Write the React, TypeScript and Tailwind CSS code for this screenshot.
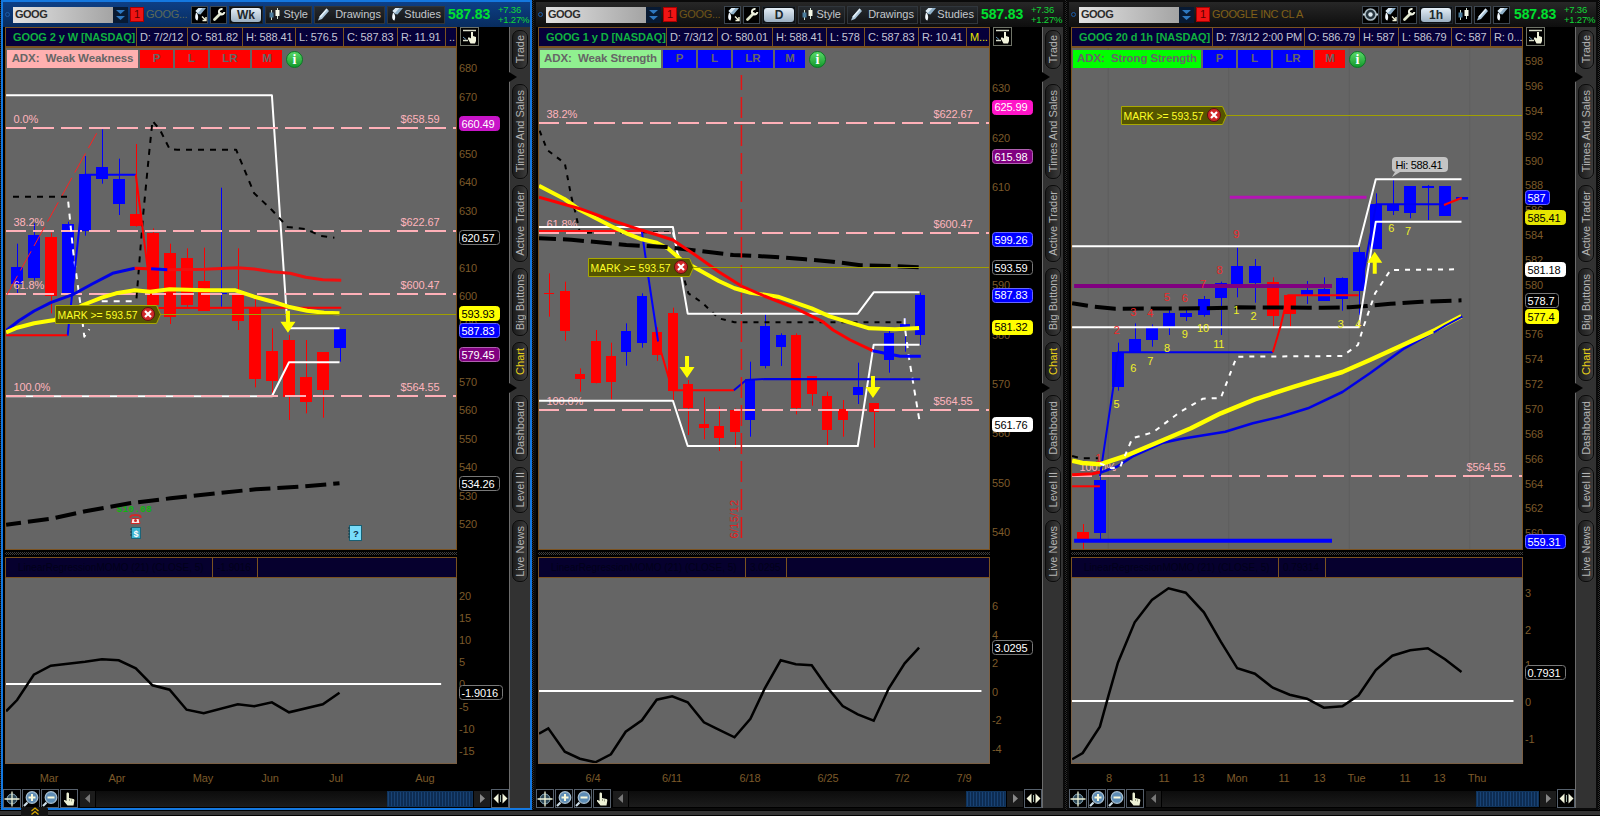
import React from 'react';

type Pt = [number, number];
type Candle = [number, number, number, number, number, 'r' | 'b']; // x, top, bottom, high, low
type Line = { c: string; w: number; p: Pt[]; dash?: string; off?: number };
type Bubble = { v: string; y: number; bg: string; fg?: string; w?: number };
type Tick = [string, number];

interface Panel {
    active?: boolean;
    wide?: boolean;
    name: string;
    period: string;
    title: string;
    cells: { t: string; w: number; c?: string }[];
    adx: { t: string; w: string; bg: string };
    mBg: string;
    flagBg: string;
    k: number;
    dx: number;
    bodyW: number;
    candles: Candle[];
    under: Line[];
    lines: Line[];
    fibs: { pct: string; price: string; y: number }[];
    mark: Pt;
    arrows: { x: number; y: number; up?: boolean }[];
    ticks: Tick[];
    bubbles: Bubble[];
    sub: { p: Pt[]; zero: number; zeroEnd: number; ticks: Tick[]; bubble: Bubble; seps: string[]; label: string; value: string };
    dates: [string, number][];
    thumb: string;
}

const RED = '#ff0000';
const BLUE = '#0000ff';
const YEL = '#ffff00';
const LONG = '21 7';
const SHORT = '6 6';

const panels: Panel[] = [
    {
        active: true,
        name: 'GOOG...',
        period: 'Wk',
        title: 'GOOG 2 y W [NASDAQ]',
        cells: [
            { t: 'D: 7/2/12', w: 51 },
            { t: 'O: 581.82', w: 55 },
            { t: 'H: 588.41', w: 53 },
            { t: 'L: 576.5', w: 48 },
            { t: 'C: 587.83', w: 54 },
            { t: 'R: 11.91', w: 48 },
            { t: '..', w: 10 },
        ],
        adx: { t: 'ADX:  Weak Weakness', w: 'w-[131px]', bg: 'bg-[#ffb0b0]' },
        mBg: 'bg-[#ff0000]',
        flagBg: 'bg-[#ff0000]',
        k: 2.931,
        dx: 0,
        bodyW: 12,
        candles: [
            [49, 561, 612, 491, 640, 'b'],
            [99, 465, 593, 430, 602, 'b'],
            [149, 471, 647, 458, 700, 'r'],
            [200, 432, 642, 425, 645, 'b'],
            [249, 282, 452, 228, 467, 'b'],
            [299, 261, 297, 148, 311, 'b'],
            [348, 297, 372, 236, 405, 'b'],
            [398, 402, 437, 192, 440, 'r'],
            [449, 458, 675, 445, 675, 'r'],
            [498, 519, 712, 491, 732, 'r'],
            [547, 534, 675, 505, 682, 'r'],
            [597, 603, 692, 503, 692, 'r'],
            [647, 640, 643, 323, 680, 'b'],
            [697, 645, 722, 505, 750, 'r'],
            [747, 683, 897, 655, 922, 'r'],
            [797, 813, 903, 745, 945, 'r'],
            [847, 780, 950, 765, 1020, 'r'],
            [896, 891, 967, 780, 1000, 'r'],
            [946, 816, 930, 816, 1013, 'r'],
            [996, 747, 804, 747, 845, 'b'],
        ],
        under: [],
        lines: [
            { c: '#fff', w: 2, p: [[18, 46], [797, 46], [843, 745], [995, 745]] },
            { c: '#fff', w: 2, p: [[18, 949], [797, 949], [847, 847], [995, 847]] },
            { c: '#ff2020', w: 1, p: [[20, 645], [283, 160]], dash: '22 6' },
            { c: '#000', w: 2, p: [[38, 350], [200, 350]], dash: SHORT },
            { c: '#fff', w: 2, p: [[200, 365], [215, 520], [235, 668], [247, 770], [262, 748]], dash: SHORT },
            { c: '#fff', w: 2, p: [[298, 664], [388, 664]], dash: SHORT },
            { c: '#000', w: 2, p: [[400, 655], [412, 500], [420, 400], [437, 220], [447, 122], [470, 152], [497, 207], [520, 209], [692, 209], [745, 340], [797, 390], [843, 441], [896, 447], [940, 468], [980, 473]], dash: SHORT },
            { c: BLUE, w: 2, p: [[198, 767], [218, 580], [249, 284], [398, 284]] },
            { c: RED, w: 2, p: [[398, 284], [442, 640], [447, 675]] },
            { c: RED, w: 2, p: [[465, 684], [1000, 683]] },
            { c: RED, w: 2, p: [[18, 766], [197, 766]] },
            { c: '#0000e6', w: 3, p: [[18, 752], [55, 722], [100, 693], [150, 667], [215, 643], [270, 612], [330, 580], [395, 565]] },
            { c: RED, w: 3, p: [[395, 565], [431, 566]] },
            { c: BLUE, w: 3, p: [[443, 566], [491, 569]] },
            { c: '#f01010', w: 3, p: [[491, 569], [600, 568], [697, 563], [745, 567], [797, 575], [850, 580], [896, 592], [946, 599], [1000, 601]] },
            { c: YEL, w: 4, p: [[18, 757], [50, 743], [100, 730], [160, 720], [243, 675], [300, 652], [340, 640], [395, 631], [440, 635], [497, 628], [600, 631], [690, 631], [745, 650], [800, 665], [845, 680], [900, 692], [950, 698], [995, 700]] },
            { c: '#000', w: 4, p: [[18, 1334], [150, 1316], [250, 1294], [380, 1270], [500, 1255], [640, 1239], [750, 1228], [880, 1220], [995, 1210]], dash: LONG, off: 6 },
        ],
        fibs: [
            { pct: '0.0%', price: '$658.59', y: 146 },
            { pct: '38.2%', price: '$622.67', y: 455 },
            { pct: '61.8%', price: '$600.47', y: 644 },
            { pct: '100.0%', price: '$564.55', y: 950 },
        ],
        mark: [162, 703],
        arrows: [{ x: 844, y: 692 }],
        ticks: [['680', 68], ['670', 97], ['650', 154], ['640', 182], ['630', 211], ['610', 268], ['600', 296], ['590', 324], ['570', 382], ['560', 410], ['550', 439], ['540', 467], ['530', 496], ['520', 524]],
        bubbles: [
            { v: '660.49', y: 123.5, bg: '#c814c8' },
            { v: '620.57', y: 237.5, bg: '#000' },
            { v: '593.93', y: 313.5, bg: YEL, fg: '#000' },
            { v: '587.83', y: 330.5, bg: BLUE },
            { v: '579.45', y: 354.5, bg: '#800080' },
            { v: '534.26', y: 483.5, bg: '#000' },
        ],
        sub: {
            p: [[18, 484], [50, 450], [99, 374], [149, 347], [249, 335], [299, 328], [348, 331], [398, 355], [447, 406], [497, 419], [547, 479], [597, 490], [697, 463], [745, 469], [797, 457], [847, 487], [946, 463], [995, 428]],
            zero: 401,
            zeroEnd: 1293,
            ticks: [['20', 596], ['15', 618], ['10', 640], ['5', 662], ['0', 684], ['-5', 707], ['-10', 729], ['-15', 751]],
            bubble: { v: '-1.9016', y: 692.5, bg: '#000', w: 44 },
            seps: ['w-[207px]', 'w-[45px]'],
            label: 'LinearRegressionMOMO (21) (CLOSE, 5)',
            value: '-1.9016',
        },
        dates: [['Mar', 49], ['Apr', 117], ['May', 203], ['Jun', 270], ['Jul', 336], ['Aug', 425]],
        thumb: 'w-[86px]',
    },
    {
        name: 'GOOG...',
        period: 'D',
        title: 'GOOG 1 y D [NASDAQ]',
        cells: [
            { t: 'D: 7/3/12', w: 51 },
            { t: 'O: 580.01', w: 55 },
            { t: 'H: 588.41', w: 54 },
            { t: 'L: 578', w: 38 },
            { t: 'C: 587.83', w: 54 },
            { t: 'R: 10.41', w: 48 },
            { t: 'M...', w: 22, c: 'text-[#e8e800]' },
        ],
        adx: { t: 'ADX:  Weak Strength', w: 'w-[121px]', bg: 'bg-[#90f090]' },
        mBg: 'bg-[#0000ff]',
        flagBg: 'bg-[#0000ff]',
        k: 2.904,
        dx: -3,
        bodyW: 10,
        candles: [
            [55, 640, 643, 580, 710, 'r'],
            [101, 633, 753, 605, 782, 'r'],
            [145, 882, 896, 865, 935, 'r'],
            [191, 783, 908, 750, 910, 'r'],
            [235, 827, 905, 788, 958, 'r'],
            [278, 753, 816, 730, 857, 'b'],
            [325, 647, 789, 640, 803, 'b'],
            [368, 755, 824, 742, 843, 'r'],
            [415, 698, 932, 683, 960, 'r'],
            [458, 912, 984, 900, 1065, 'r'],
            [505, 1032, 1043, 952, 1078, 'r'],
            [548, 1039, 1073, 980, 1113, 'r'],
            [595, 991, 1055, 985, 1103, 'r'],
            [638, 897, 1019, 845, 1070, 'b'],
            [682, 738, 857, 702, 865, 'b'],
            [728, 765, 800, 760, 858, 'b'],
            [772, 765, 984, 760, 1003, 'r'],
            [818, 888, 941, 888, 977, 'r'],
            [862, 948, 1050, 935, 1100, 'r'],
            [908, 987, 1019, 960, 1070, 'r'],
            [952, 921, 944, 848, 972, 'b'],
            [998, 969, 995, 969, 1103, 'r'],
            [1042, 759, 839, 750, 878, 'b'],
            [1088, 732, 740, 715, 815, 'b'],
            [1132, 645, 765, 638, 795, 'b'],
        ],
        under: [],
        lines: [
            { c: '#000', w: 2, p: [[28, 152], [50, 210], [101, 250], [120, 350], [130, 390], [145, 458], [300, 457], [415, 457]], dash: '5 6' },
            { c: '#fff', w: 2, p: [[415, 457], [435, 545]], dash: '5 6' },
            { c: '#000', w: 2, p: [[440, 570], [460, 640], [500, 668], [548, 715], [594, 727], [1088, 727]], dash: '5 6' },
            { c: '#fff', w: 2, p: [[1088, 715], [1088, 737], [1100, 830], [1131, 1023]], dash: SHORT },
            { c: '#fff', w: 2, p: [[26, 441], [415, 441], [458, 701], [952, 701], [998, 637], [1131, 637]] },
            { c: '#fff', w: 2, p: [[26, 962], [415, 962], [458, 1098], [952, 1098], [998, 794], [1131, 794]] },
            { c: '#ff1010', w: 2, p: [[26, 453], [325, 453]] },
            { c: BLUE, w: 2, p: [[325, 455], [345, 600], [372, 785]] },
            { c: RED, w: 2, p: [[372, 785], [402, 890], [413, 931], [592, 931]] },
            { c: '#0000e6', w: 2, p: [[592, 931], [628, 900], [682, 897], [1133, 898]] },
            { c: YEL, w: 4, p: [[26, 317], [100, 357], [145, 390], [235, 438], [280, 460], [325, 478], [368, 488], [400, 505], [440, 540], [500, 575], [548, 603], [594, 625], [640, 638], [720, 650], [818, 685], [870, 709], [930, 728], [985, 745], [1060, 748], [1130, 744]] },
            { c: '#000', w: 4, p: [[26, 475], [120, 479], [200, 487], [280, 495], [395, 501], [500, 514], [590, 525], [700, 530], [800, 538], [880, 545], [960, 556], [1050, 558], [1130, 562]], dash: LONG, off: 4 },
            { c: RED, w: 3, p: [[26, 352], [145, 386], [235, 420], [325, 451], [368, 464], [415, 480], [480, 525], [548, 575], [614, 618], [680, 648], [772, 685], [850, 725], [880, 750], [930, 780], [995, 812]] },
            { c: BLUE, w: 3, p: [[995, 812], [1042, 822], [1075, 829], [1135, 829]] },
            { c: '#e61414', w: 1.5, p: [[614, -15], [614, 1392]], dash: '21 7', off: 6 },
        ],
        fibs: [
            { pct: '38.2%', price: '$622.67', y: 130 },
            { pct: '61.8%', price: '$600.47', y: 461 },
            { pct: '100.0%', price: '$564.55', y: 991 },
        ],
        mark: [169, 562],
        arrows: [{ x: 456, y: 828 }, { x: 996, y: 888 }],
        ticks: [['630', 88], ['620', 138], ['610', 187], ['590', 285], ['580', 335], ['570', 384], ['560', 433], ['550', 483], ['540', 532]],
        bubbles: [
            { v: '625.99', y: 107, bg: '#ff14c8' },
            { v: '615.98', y: 156.5, bg: '#800080' },
            { v: '599.26', y: 239.5, bg: BLUE },
            { v: '593.59', y: 267.5, bg: '#000' },
            { v: '587.83', y: 295, bg: BLUE },
            { v: '581.32', y: 327, bg: YEL, fg: '#000' },
            { v: '561.76', y: 424.5, bg: '#fff', fg: '#000' },
        ],
        sub: {
            p: [[26, 551], [53, 535], [101, 605], [145, 626], [190, 637], [235, 613], [278, 545], [325, 511], [368, 449], [413, 439], [458, 457], [505, 517], [548, 539], [594, 562], [640, 506], [682, 415], [728, 331], [772, 343], [818, 346], [862, 410], [908, 468], [952, 493], [998, 512], [1042, 415], [1088, 340], [1130, 293]],
            zero: 424,
            zeroEnd: 1311,
            ticks: [['6', 606], ['4', 634.5], ['2', 663], ['0', 692], ['-2', 720], ['-4', 749]],
            bubble: { v: '3.0295', y: 647.5, bg: '#000' },
            seps: ['w-[207px]', 'w-[41px]'],
            label: 'LinearRegressionMOMO (21) (CLOSE, 5)',
            value: '3.0295',
        },
        dates: [['6/4', 60], ['6/11', 139], ['6/18', 217], ['6/25', 295], ['7/2', 369], ['7/9', 431]],
        thumb: 'w-[40px]',
    },
    {
        wide: true,
        name: 'GOOGLE INC CL A',
        period: '1h',
        title: 'GOOG 20 d 1h [NASDAQ]',
        cells: [
            { t: 'D: 7/3/12 2:00 PM', w: 92 },
            { t: 'O: 586.79', w: 55 },
            { t: 'H: 587', w: 39 },
            { t: 'L: 586.79', w: 53 },
            { t: 'C: 587', w: 39 },
            { t: 'R: 0...', w: 31 },
        ],
        adx: { t: 'ADX:  Strong Strength', w: 'w-[128px]', bg: 'bg-[#00ff00]' },
        mBg: 'bg-[#ff0000]',
        flagBg: 'bg-[#0000ff]',
        k: 2.904,
        dx: -6,
        bodyW: 12,
        candles: [
            [66, 1356, 1376, 1332, 1410, 'r'],
            [116, 1200, 1359, 1180, 1378, 'b'],
            [168, 816, 920, 788, 932, 'b'],
            [217, 777, 817, 730, 817, 'b'],
            [267, 742, 781, 733, 800, 'b'],
            [317, 698, 740, 690, 765, 'b'],
            [365, 698, 711, 690, 723, 'b'],
            [418, 656, 706, 648, 710, 'b'],
            [467, 609, 655, 605, 765, 'b'],
            [515, 558, 612, 503, 652, 'b'],
            [566, 558, 609, 537, 668, 'b'],
            [618, 605, 708, 592, 740, 'r'],
            [667, 645, 702, 645, 745, 'r'],
            [717, 630, 647, 603, 672, 'b'],
            [766, 627, 663, 592, 663, 'b'],
            [818, 594, 657, 592, 692, 'b'],
            [868, 516, 633, 500, 705, 'b'],
            [918, 372, 507, 340, 507, 'b'],
            [967, 373, 393, 298, 405, 'b'],
            [1017, 318, 398, 318, 415, 'b'],
            [1068, 318, 323, 315, 420, 'b'],
            [1118, 318, 407, 318, 407, 'b'],
        ],
        under: [
            { c: '#5e5e5e', w: 1, p: [[140, -96], [140, 1407]] },
            { c: '#5e5e5e', w: 1, p: [[490, -96], [490, 1407]] },
            { c: '#5e5e5e', w: 1, p: [[840, -96], [840, 1407]] },
            { c: '#5e5e5e', w: 1, p: [[1190, -96], [1190, 1407]] },
        ],
        lines: [
            { c: '#b414b4', w: 3, p: [[493, 352], [890, 352]] },
            { c: '#800080', w: 4, p: [[41, 618], [790, 618]] },
            { c: BLUE, w: 4, p: [[41, 1382], [790, 1382]] },
            { c: '#000', w: 4, p: [[35, 670], [100, 680], [160, 686], [420, 685], [520, 682], [760, 683], [840, 682], [890, 678], [960, 671], [1050, 665], [1166, 661]], dash: LONG, off: 5 },
            { c: '#fff', w: 2, p: [[35, 499], [867, 499], [917, 298], [1166, 298]] },
            { c: '#fff', w: 2, p: [[35, 742], [867, 742], [917, 425], [1166, 425]] },
            { c: '#0000f0', w: 2, p: [[116, 1190], [155, 920], [168, 817], [618, 817]] },
            { c: RED, w: 2, p: [[618, 817], [640, 740], [662, 646], [867, 646]] },
            { c: '#0000f0', w: 2, p: [[872, 632], [918, 373], [1115, 373]] },
            { c: BLUE, w: 2.5, p: [[1150, 355], [1185, 355]] },
            { c: RED, w: 2, p: [[1115, 375], [1167, 353]] },
            { c: RED, w: 2, p: [[35, 1219], [116, 1219]] },
            { c: '#000', w: 2, p: [[35, 1128], [60, 1135], [110, 1135]], dash: SHORT },
            { c: '#0000e6', w: 2.5, p: [[116, 1178], [165, 1160], [210, 1130], [300, 1088], [350, 1077], [480, 1055], [560, 1030], [640, 1010], [720, 985], [820, 936], [900, 880], [1000, 805], [1090, 753], [1168, 709]] },
            { c: YEL, w: 4.5, p: [[35, 1142], [65, 1149], [116, 1153], [190, 1128], [300, 1080], [380, 1045], [467, 1000], [566, 958], [680, 920], [820, 876], [900, 840], [1000, 793], [1090, 750], [1166, 709]] },
            { c: '#0000e6', w: 2, p: [[1085, 758], [1120, 736], [1168, 710]] },
            { c: RED, w: 3, p: [[35, 1184], [95, 1181], [116, 1176]] },
            { c: '#fff', w: 2, p: [[116, 1150], [150, 1165], [175, 1160], [210, 1075], [270, 1057], [350, 995], [415, 956], [467, 954], [513, 830], [820, 828], [865, 795], [880, 745], [915, 640], [960, 570], [1155, 568]], dash: '5 6' },
        ],
        fibs: [{ pct: '100.0%', price: '$564.55', y: 1190 }],
        mark: [178, 106],
        arrows: [{ x: 914, y: 515, up: true }],
        ticks: [['598', 61], ['596', 86], ['594', 111], ['592', 136], ['590', 161], ['588', 185], ['586', 210], ['584', 235], ['582', 260], ['580', 285], ['576', 334], ['574', 359], ['572', 384], ['570', 409], ['568', 434], ['566', 459], ['564', 484], ['562', 508], ['560', 533]],
        bubbles: [
            { v: '587', y: 197.5, bg: BLUE, w: 25 },
            { v: '585.41', y: 217.5, bg: '#e6e600', fg: '#000' },
            { v: '581.18', y: 269.5, bg: '#fff', fg: '#000' },
            { v: '578.7', y: 300.5, bg: '#000', w: 34 },
            { v: '577.4', y: 316.5, bg: YEL, fg: '#000', w: 34 },
            { v: '559.31', y: 541.5, bg: BLUE },
        ],
        sub: {
            p: [[35, 628], [66, 609], [116, 530], [140, 440], [168, 338], [217, 217], [267, 150], [315, 115], [365, 128], [418, 187], [467, 275], [515, 355], [566, 371], [618, 413], [667, 434], [717, 446], [766, 473], [820, 469], [867, 436], [917, 360], [965, 317], [1017, 301], [1068, 295], [1118, 328], [1166, 366]],
            zero: 454,
            zeroEnd: 1317,
            ticks: [['3', 593], ['2', 630], ['1', 665], ['0', 702], ['-1', 738.5]],
            bubble: { v: '0.7931', y: 672.5, bg: '#000' },
            seps: ['w-[207px]', 'w-[47px]'],
            label: 'LinearRegressionMOMO (21) (CLOSE, 5)',
            value: '0.79314',
        },
        dates: [['8', 43], ['11', 98], ['13', 132.5], ['Mon', 171], ['11', 218], ['13', 253.5], ['Tue', 290.5], ['11', 339], ['13', 373.5], ['Thu', 411]],
        thumb: 'w-[63px]',
    },
];

// countdown / setup numbers on the hourly chart
const redCounts: [string, number, number][] = [['9', 512, 462], ['8', 463, 570], ['7', 415, 612], ['6', 362, 653], ['5', 311, 652], ['4', 262, 698], ['3', 213, 695], ['2', 165, 750], ['1', 112, 1133]];
const yellowCounts: [string, number, number][] = [['1', 512, 690], ['2', 562, 709], ['3', 815, 731], ['4', 866, 731], ['6', 962, 444], ['7', 1011, 453], ['10', 415, 745], ['9', 362, 762], ['8', 311, 803], ['11', 461, 791], ['7', 262, 842], ['6', 213, 865], ['5', 164, 972]];

const tabs = [
    { t: 'Trade', c: 'mt-[3px] h-[39px]' },
    { t: 'Times And Sales', c: 'mt-[15px] h-[95px]' },
    { t: 'Active Trader', c: 'mt-[6px] h-[77px]' },
    { t: 'Big Buttons', c: 'mt-[6px] h-[68px]' },
    { t: 'Chart', c: 'mt-[6px] h-[39px]' },
    { t: 'Dashboard', c: 'mt-[14px] h-[66px]' },
    { t: 'Level II', c: 'mt-[6px] h-[46px]' },
    { t: 'Live News', c: 'mt-[7px] h-[62px]' },
];

const StudiesIcon = ({ small }: { small?: boolean }) => (
    <svg width="14" height="15" viewBox="0 0 14 15" className="shrink-0">
        <path d="M2.500 4 5.500 1H13L7.500 7.500 5 7Z" fill="#8fb0c8" />
        <path d="M2.500 4 5.500 1H9.500L5 6Z" fill="#dceaf4" />
        <path d="M3.200 5.500C5.200 7.500 5.800 10 4.500 13.500 2 13.500 1.500 9.500 3.200 5.500Z" fill="#f4faff" />
        {small && <path d="M9 9.500 12.500 13M13 10V13.500H9.500" stroke="#f2f2d8" strokeWidth="1.400" fill="none" />}
    </svg>
);

const WrenchIcon = () => (
    <svg width="14" height="15" viewBox="0 0 14 15">
        <path d="M2.500 12.500 8.500 6.500" stroke="#dfe6cc" strokeWidth="2.800" strokeLinecap="round" />
        <path d="M10.500 2.200A2.700 2.700 0 1 0 12.300 5" stroke="#f0f4e4" strokeWidth="2" fill="none" />
    </svg>
);

const CandleIcon = () => (
    <svg width="13" height="15" viewBox="0 0 13 15" className="shrink-0">
        <path d="M3.500 3V13M9.500 1V12" stroke="#cfe0d0" />
        <rect x="1.500" y="5.500" width="4" height="5" fill="#4b7c9c" />
        <rect x="7.500" y="3" width="4" height="6" fill="#f4f8e8" />
    </svg>
);

const PencilIcon = () => (
    <svg width="13" height="15" viewBox="0 0 13 15" className="shrink-0">
        <path d="M1 13.500 2.500 9.500 9.500 1.500 12 4 5 12Z" fill="#a9c4d8" />
        <path d="M2.500 9.500 9.500 1.500 10.600 2.600 3.600 10.800Z" fill="#e6f2fa" />
    </svg>
);

const TargetIcon = () => (
    <svg width="15" height="15" viewBox="0 0 15 15">
        <circle cx="7.500" cy="7.500" r="5.500" stroke="#a8b8c0" strokeWidth="1.600" fill="#26343e" />
        <circle cx="7.500" cy="7.500" r="2.200" fill="#dce8ee" />
        <path d="M0 7.500H2M13 7.500H15" stroke="#c8d8e0" strokeWidth="2" />
    </svg>
);

const HandIcon = () => (
    <svg width="16" height="16" viewBox="0 0 16 16">
        <path d="M6.500 1.500c1 0 1.500.5 1.500 1.500v4l4.500 1c.8.3 1 1 .8 1.800L12.500 14.500h-6L3 10.200c-.3-.8.500-1.500 1.300-1L5.500 10V3c0-1 .3-1.500 1-1.500Z" fill="#eef2d6" />
        <path d="M8.500 8v2M10.500 8.500v2" stroke="#7d8468" strokeWidth=".7" />
    </svg>
);

const ZoomIcon = ({ plus }: { plus?: boolean }) => (
    <svg width="16" height="17" viewBox="0 0 16 17">
        <path d="M1 16 4.500 12.500" stroke="#cfe0ea" strokeWidth="2.200" />
        <circle cx="9" cy="7.500" r="5.800" fill="#5d8cb4" stroke="#a8c0d2" strokeWidth="1.200" />
        <path d={plus ? 'M5.500 7.500H12.500M9 4V11' : 'M5.500 7.500H12.500'} stroke="#fafadc" strokeWidth="2" />
    </svg>
);

const IconBox = ({ children }: { children: React.ReactNode }) => (
    <div className="flex h-[18px] w-[17px] shrink-0 items-center justify-center overflow-hidden border border-[#3c4650] bg-black">{children}</div>
);

const ToolBox = ({ children }: { children: React.ReactNode }) => (
    <div className="flex h-[19px] w-[18px] shrink-0 items-center justify-center border border-[#56606c] bg-black">{children}</div>
);

const TextButton = ({ w, label, children }: { w: string; label: string; children: React.ReactNode }) => (
    <button className={`flex h-[18px] shrink-0 items-center justify-between border border-[#30363c] bg-gradient-to-b from-[#262a2e] to-[#131518] pl-[2px] pr-[3px] text-[11px] text-[#c4c8cc] ${w}`}>
        {children}
        <span>{label}</span>
    </button>
);

const Header = ({ d }: { d: Panel }) => (
    <div className={`flex h-[25px] shrink-0 items-center pl-[2px] ${d.active ? 'bg-gradient-to-b from-[#0d3f86] to-[#082c5e]' : 'bg-gradient-to-b from-[#272727] to-[#0e0e0e]'}`}>
        <span className="mr-[3px] size-[5px] rounded-full border border-[#1c5ca8]" />
        <div className="flex h-[16px] w-[100px] shrink-0 items-center bg-gradient-to-r from-[#e2e2e2] to-[#a4a4a4] pl-[2px] text-[11px] font-bold tracking-[-0.5px] text-[#2c2c2c]">GOOG</div>
        <div className="flex h-[16px] w-[15px] shrink-0 flex-col items-center justify-center bg-[#081a33]">
            <svg width="9" height="12" viewBox="0 0 9 12"><path d="M0 1H9L4.500 5ZM0 7H9L4.500 11Z" fill="#2e78c0" /></svg>
        </div>
        <div className="ml-[2px] flex h-[15px] w-[14px] shrink-0 items-center justify-center border border-[#a00] bg-[#f01414] text-[11px] text-[#5a0000]">1</div>
        <div className={`ml-[2px] shrink-0 whitespace-nowrap ${d.wide ? 'w-[150px] text-[11px] tracking-[-0.35px] text-[#806018]' : d.active ? 'w-[45px] text-[11px] tracking-[-0.3px] text-[#5c6a58]' : 'w-[45px] text-[11px] tracking-[-0.3px] text-[#6e5418]'}`}>{d.name}</div>
        <div className="flex shrink-0 items-center gap-[2px]">
            {d.wide && <IconBox><TargetIcon /></IconBox>}
            <IconBox><StudiesIcon small /></IconBox>
            <IconBox><WrenchIcon /></IconBox>
            <div className="flex h-[18px] w-[34px] shrink-0 items-center justify-center border border-[#20262c] bg-[#0c1014]">
                <span className="flex h-[14px] w-[30px] items-center justify-center rounded-[3px] bg-gradient-to-b from-[#e4eef6] to-[#9cb0c2] text-[12px] font-bold text-[#20282e]">{d.period}</span>
            </div>
            {d.wide ? (
                <>
                    <IconBox><CandleIcon /></IconBox>
                    <IconBox><PencilIcon /></IconBox>
                    <IconBox><StudiesIcon /></IconBox>
                </>
            ) : (
                <>
                    <TextButton w="w-[47px]" label="Style"><CandleIcon /></TextButton>
                    <TextButton w="w-[71px]" label="Drawings"><PencilIcon /></TextButton>
                    <TextButton w="w-[58px]" label="Studies"><StudiesIcon /></TextButton>
                </>
            )}
        </div>
        <div className="ml-auto w-[50px] shrink-0 text-[14px] font-bold tracking-[-0.1px] text-[#00e030]">587.83</div>
        <div className="w-[32px] shrink-0 text-[9.5px] leading-[10px] tracking-[-0.2px] text-[#12d838]">
            <div>+7.36</div>
            <div>+1.27%</div>
        </div>
    </div>
);

const InfoStrip = ({ d }: { d: Panel }) => (
    <div className="flex h-[20px] w-full shrink-0 text-[11px] text-[#c4c4d4]">
        <div className="flex w-[452px] border border-[#7a5220] bg-[#06003a]">
            <div className="flex flex-1 items-center whitespace-pre border-r border-[#7a5220] pl-[7px] text-[11px] font-bold tracking-[-0.1px] text-[#10b040]">{d.title}</div>
            {d.cells.map((cell, i) => (
                <div key={i} style={{ width: cell.w }} className={`flex shrink-0 items-center overflow-hidden whitespace-nowrap pl-[3px] tracking-[-0.15px] ${i < d.cells.length - 1 ? 'border-r border-[#7a5220]' : ''} ${cell.c || ''}`}>
                    {cell.t}
                </div>
            ))}
        </div>
        <div className="ml-[3px] flex h-[19px] w-[19px] items-center justify-center border border-[#707468] bg-black">
            <svg width="17" height="17" viewBox="0 0 17 17">
                <path d="M2 2.500H15M2 12.500H7" stroke="#d8dcc8" strokeWidth="1.500" />
                <path d="M2 9 5 11.500" stroke="#70a0c0" />
                <path d="M10 4h2v4l3 1v4l-1 2.500H9.500L7 11v-1.500h1.500L10 10.500Z" fill="#f2f4dc" />
            </svg>
        </div>
    </div>
);

const AxisBubble = ({ b }: { b: Bubble }) => (
    <g>
        <rect x="459.5" y={Math.round(b.y - 7.5) + 0.5} width={(b.w || 41) - 1} height="14" rx="3" fill={b.bg} stroke={b.bg === '#000' ? '#787878' : b.bg === BLUE ? '#6868ff' : b.bg === '#800080' ? '#b060b0' : b.bg} />
        <text x="461.500" y={b.y + 4} fill={b.fg || '#fff'}>{b.v}</text>
    </g>
);

const PriceChart = ({ d, id }: { d: Panel; id: number }) => {
    // plot data is kept on a 3x grid, X and Y bring it to panel pixels
    const X = (x: number) => x / d.k + d.dx;
    const Y = (y: number) => y / 3 + 80;
    const pts = (p: Pt[]) => p.map(([x, y]) => `${X(x).toFixed(1)},${Y(y).toFixed(1)}`).join(' ');
    const poly = (l: Line, i: number) => (
        <polyline key={i} points={pts(l.p)} fill="none" stroke={l.c} strokeWidth={l.w} strokeDasharray={l.dash} strokeDashoffset={l.off} strokeLinejoin="round" />
    );
    const mx = Math.round(X(d.mark[0])) + 0.5;
    const my = Math.floor(Y(d.mark[1])) + 0.5;

    return (
        <svg width="506" height="504" viewBox="3 47 506 504" className="block" fontSize="11" letterSpacing="-0.1">
            <defs>
                <clipPath id={`plot${id}`}><rect x="6" y="48" width="450" height="501" /></clipPath>
            </defs>
            <rect x="5.500" y="47.500" width="451" height="502" fill="#656565" stroke="#7a5220" />
            <g clipPath={`url(#plot${id})`}>
                {d.under.map(poly)}
                {d.candles.map(([x, top, bottom, high, low, c], i) => {
                    const cx = Math.round(X(x));
                    const y0 = Math.round(Y(top));
                    return (
                        <g key={i} fill={c === 'r' ? RED : BLUE}>
                            <rect x={cx} y={Y(high)} width="1" height={Y(low) - Y(high)} />
                            <rect x={cx - d.bodyW / 2} y={y0} width={d.bodyW} height={Math.max(1, Math.round(Y(bottom)) - y0)} />
                        </g>
                    );
                })}
                {id === 0 && <text x="116.500" y="512" fontSize="9.500" fontWeight="bold" fill="#10b410" fontFamily="'Liberation Mono', monospace" letterSpacing="0.200">$10.08</text>}
                {d.lines.slice(0, 2).map(poly)}
                {d.fibs.map((f) => (
                    <g key={f.pct} fill="#ffb4bc">
                        <path d={`M6 ${Math.floor(Y(f.y))}H456`} stroke="#ffb0b8" strokeWidth="2" strokeDasharray={LONG} strokeDashoffset="1" />
                        <text x="13.500" y={Y(f.y) - 5.500}>{f.pct}</text>
                        <text x="400.500" y={Y(f.y) - 5.500}>{f.price}</text>
                    </g>
                ))}
                {d.lines.slice(2).map(poly)}
                <path d={`M${mx + 104} ${my}H456`} stroke="#a0a000" />
                <path d={`M${mx} ${my - 9}h101l4 9l-4 9h-101Z`} fill="#555500" stroke="#a8a800" />
                <text x={mx + 2} y={my + 4} fill="#ffff28" letterSpacing="0" textLength="80" lengthAdjust="spacingAndGlyphs">{'MARK >= 593.57'}</text>
                <circle cx={mx + 92.500} cy={my - 0.500} r="6.500" fill="#d02828" stroke="#5a1010" />
                <path d={`M${mx + 89.500} ${my - 3.500}l6 6m0 -6l-6 6`} stroke="#fff" strokeWidth="2.200" />
                {d.arrows.map((a, i) => {
                    const ax = X(a.x);
                    const ay = Y(a.y);
                    return (
                        <path key={i} fill={YEL} d={a.up ? `M${ax} ${ay}l7.500 11h-5.500v11h-4v-11h-5.500Z` : `M${ax - 2} ${ay}h4v11h5.500l-7.500 11l-7.500 -11h5.500Z`} />
                    );
                })}
                {id === 0 && (
                    <g>
                        <path d="M131 523.500 132 518.500H139L140 523.500Z" fill="#f6e4e4" stroke="#d02828" />
                        <path d="M130.500 518V516.500C132 514.500 139 514.500 140.500 516.500V518" stroke="#d02828" strokeWidth="2" fill="none" />
                        <circle cx="135.500" cy="520.500" r="1.500" fill="#d02828" />
                        <rect x="131.500" y="527.500" width="9" height="11" fill="#3cb4d0" stroke="#1c6478" />
                        <path d="M130 529h2M130 532h2M130 535h2" stroke="#103c48" />
                        <text x="133.500" y="536.500" fontSize="9" fontWeight="bold" fill="#fff">$</text>
                        <rect x="349.500" y="525.500" width="12" height="15" fill="#78dcfa" stroke="#186074" />
                        <path d="M348 528h2M348 531h2M348 534h2M348 537h2" stroke="#103c48" />
                        <text x="353" y="536.500" fontSize="9.500" fontWeight="bold" fill="#102c48">?</text>
                    </g>
                )}
                {id === 1 && <text transform="translate(204.500 538.500) rotate(-90)" fill="#e62020" letterSpacing="0.300">6/15/12</text>}
                {id === 2 && (
                    <g>
                        <g textAnchor="middle" fill="#f02828">
                            {redCounts.map(([t, x, y], i) => <text key={i} x={X(x)} y={Y(y) + 4}>{t}</text>)}
                        </g>
                        <g textAnchor="middle" fill="#f0f028">
                            {yellowCounts.map(([t, x, y], i) => <text key={i} x={X(x)} y={Y(y) + 4}>{t}</text>)}
                        </g>
                        <path d="M326 177 329 172h5Z" fill="#c4c4c4" />
                        <rect x="326" y="157" width="56" height="15" rx="4" fill="#c4c4c4" />
                        <text x="329.500" y="169" textLength="47">Hi: 588.41</text>
                    </g>
                )}
            </g>
            <g fill="#7c5a2a">
                {d.ticks.map(([t, y]) => <text key={t} x="459" y={y + 4}>{t}</text>)}
            </g>
            {d.bubbles.map((b) => <AxisBubble key={b.v} b={b} />)}
        </svg>
    );
};

const SubChart = ({ d, id }: { d: Panel; id: number }) => {
    const X = (x: number) => x / d.k + d.dx;
    const Y = (y: number) => y / 3 + 550;
    return (
        <svg width="506" height="211" viewBox="3 578 506 211" className="block" fontSize="11" letterSpacing="-0.1">
            <defs>
                <clipPath id={`sub${id}`}><rect x="6" y="578" width="450" height="185" /></clipPath>
            </defs>
            <rect x="5.500" y="577.500" width="451" height="186" fill="#656565" stroke="#7a5f44" />
            <g clipPath={`url(#sub${id})`}>
                <path d={`M6 ${Math.round(Y(d.sub.zero))}H${X(d.sub.zeroEnd)}`} stroke="#fff" strokeWidth="2" />
                <polyline points={d.sub.p.map(([x, y]) => `${X(x).toFixed(1)},${Y(y).toFixed(1)}`).join(' ')} fill="none" stroke="#000" strokeWidth="2.500" />
            </g>
            <g fill="#7c5a2a">
                {d.sub.ticks.map(([t, y]) => <text key={t} x="459" y={y + 4}>{t}</text>)}
            </g>
            <g fill="#7c5a2a" textAnchor="middle">
                {d.dates.map(([t, x], i) => <text key={i} x={x} y="782">{t}</text>)}
            </g>
            <AxisBubble b={d.sub.bubble} />
        </svg>
    );
};

const Flags = ({ d }: { d: Panel }) => (
    <div className="absolute left-[4px] top-[3px] flex h-[18px] items-stretch gap-[2px] text-[11.5px] font-bold text-[#666]">
        <div className={`flex items-center justify-center whitespace-pre tracking-[-0.1px] ${d.adx.w} ${d.adx.bg}`}>{d.adx.t}</div>
        <div className={`flex w-[33px] items-center justify-center ${d.flagBg}`}>P</div>
        <div className={`flex w-[33px] items-center justify-center ${d.flagBg}`}>L</div>
        <div className={`flex w-[40px] items-center justify-center ${d.flagBg}`}>LR</div>
        <div className={`flex w-[30px] items-center justify-center ${d.mBg}`}>M</div>
        <div className="ml-[2px] mt-px flex size-[17px] items-center justify-center rounded-full border border-[#0a7a24] bg-gradient-to-b from-[#58d868] to-[#0c9a2c] font-['Liberation_Serif',serif] text-[14px] leading-none text-white">i</div>
    </div>
);

const Toolbar = ({ thumb }: { thumb: string }) => (
    <div className="flex h-[19px] shrink-0 items-center gap-px">
        <ToolBox>
            <svg width="16" height="16" viewBox="0 0 16 16">
                <circle cx="8" cy="8" r="5" fill="#2c4654" stroke="#88a8b8" />
                <path d="M8 0.500V15.500M0.500 8H15.500" stroke="#f0f4d8" strokeWidth="1.300" />
            </svg>
        </ToolBox>
        <ToolBox><ZoomIcon plus /></ToolBox>
        <ToolBox><ZoomIcon /></ToolBox>
        <ToolBox><HandIcon /></ToolBox>
        <div className="ml-px flex h-[16px] w-[15px] items-center justify-center bg-[#1c1c1c]">
            <svg width="5" height="9" viewBox="0 0 5 9"><path d="M5 0V9L0 4.500Z" fill="#787878" /></svg>
        </div>
        <div className="flex h-[16px] flex-1 justify-end bg-gradient-to-b from-[#0c0c0c] to-[#1c1c1c]">
            <div className={`h-[16px] border border-[#10345c] bg-[repeating-linear-gradient(90deg,#184274_0_1px,#0d2c52_1px_3px)] ${thumb}`} />
        </div>
        <div className="flex h-[16px] w-[16px] items-center justify-center bg-[#1c1c1c]">
            <svg width="5" height="9" viewBox="0 0 5 9"><path d="M0 0V9L5 4.500Z" fill="#888" /></svg>
        </div>
        <ToolBox>
            <svg width="15" height="11" viewBox="0 0 15 11">
                <path d="M5.500 0.500V10.500L0.500 5.500ZM9.500 0.500V10.500L14.500 5.500Z" fill="#f2f4dc" />
                <path d="M7.500 2V9" stroke="#a0b4a8" />
            </svg>
        </ToolBox>
    </div>
);

const SideTabs = () => (
    <div className="relative flex w-[21px] shrink-0 flex-col items-center border-l border-[#6c6c6c] bg-[#323232]">
        {tabs.map((tab) => (
            <div key={tab.t} className={`flex w-[16px] shrink-0 items-center justify-center rounded-[7px] border border-[#0c0c0c] bg-gradient-to-r from-[#1c1c1c] to-[#3c3c3c] shadow-[0_0_1px_#444] ${tab.c}`}>
                <span className={`rotate-180 whitespace-nowrap text-[11px] leading-[14px] [writing-mode:vertical-rl] ${tab.t === 'Chart' ? 'text-[#e8d018]' : 'text-[#b4b4b4]'}`}>{tab.t}</span>
            </div>
        ))}
        <svg width="8" height="10" viewBox="0 0 8 10" className="absolute -left-px top-[45px]"><path d="M0 0 8 5 0 10Z" fill="#000" /></svg>
        <svg width="8" height="10" viewBox="0 0 8 10" className="absolute -left-px top-[356px]"><path d="M0 0 8 5 0 10Z" fill="#000" /></svg>
    </div>
);

const ChartPanel = ({ d, id }: { d: Panel; id: number }) => (
    <div className="h-[810px] w-[533px] shrink-0 pl-px">
        <div className={`flex h-[810px] w-[531px] flex-col border-2 bg-black ${d.active ? 'border-[#1478e0]' : 'border-[#0a0a0a]'}`}>
            <Header d={d} />
            <div className="flex min-h-0 flex-1">
                <div className="flex w-[506px] shrink-0 flex-col">
                    <div className="pl-[2px]"><InfoStrip d={d} /></div>
                    <div className="relative">
                        <PriceChart d={d} id={id} />
                        <Flags d={d} />
                    </div>
                    <div className="mb-[2px] ml-[2px] mt-px h-[3px] w-[452px] bg-[repeating-conic-gradient(#3c3c3c_0_25%,#000_0_50%)] bg-[length:2px_2px]" />
                    <div className="ml-[2px] flex h-[21px] w-[452px] items-center overflow-hidden border border-[#7a5220] bg-[#06002e] text-[10px] text-[#02001a]">
                        <div className={`flex h-full shrink-0 items-center overflow-hidden whitespace-nowrap border-r border-[#7a5220] pl-[12px] ${d.sub.seps[0]}`}>{d.sub.label}</div>
                        <div className={`flex h-full shrink-0 items-center overflow-hidden whitespace-nowrap border-r border-[#7a5220] pl-[4px] ${d.sub.seps[1]}`}>{d.sub.value}</div>
                    </div>
                    <SubChart d={d} id={id} />
                    <Toolbar thumb={d.thumb} />
                </div>
                <SideTabs />
            </div>
        </div>
    </div>
);

const App: React.FC = () => {
    return (
        <div className="relative flex h-[816px] w-[1600px] flex-col overflow-hidden bg-black font-['Liberation_Sans',sans-serif]">
            <div className="flex h-[810px] bg-[repeating-conic-gradient(#2c2c2c_0_25%,#000_0_50%)] bg-[length:2px_2px]">
                {panels.map((d, i) => (
                    <ChartPanel key={i} d={d} id={i} />
                ))}
            </div>
            <div className="mt-px h-[4px] bg-[#343434]" />
            {/* collapsed drawer handle */}
            <div className="absolute bottom-0 left-[21px] flex h-[9px] w-[27px] justify-center rounded-t-[2px] bg-[#141414]">
                <svg width="8" height="8" viewBox="0 0 8 8"><path d="M0.500 4 4 1 7.500 4M0.500 7.500 4 4.500 7.500 7.500" stroke="#d8a800" strokeWidth="1.300" fill="none" /></svg>
            </div>
        </div>
    );
};

export default App;
